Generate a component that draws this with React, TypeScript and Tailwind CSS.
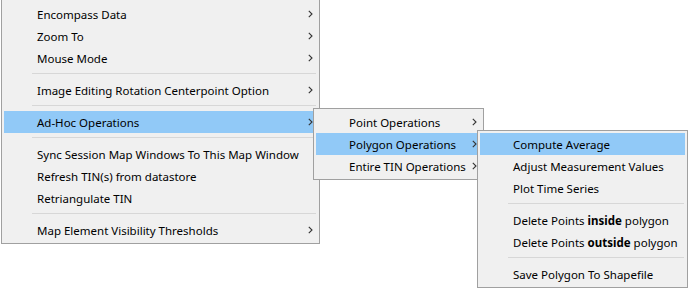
import React from "react";

type Item =
  | { type: "sep" }
  | { type: "item"; label: React.ReactNode; sub?: boolean; active?: boolean };

const Chevron = () => (
  <svg width="5" height="8" viewBox="0 0 5 8" className="block">
    <path d="M0.8 0.8 L4 4 L0.8 7.2" fill="none" stroke="#333333" strokeWidth="1.1" />
  </svg>
);

function Menu({ items, className }: { items: Item[]; className: string }) {
  return (
    <div className={className}>
      {items.map((it, i) =>
        it.type === "sep" ? (
          <div key={i} className="h-[10px] pt-[4px] pl-[28px] pr-[1px]">
            <div className="h-px bg-[#d7d7d7]" />
          </div>
        ) : (
          <div
            key={i}
            className={`flex h-[22px] items-center pl-[33px] pr-[4px] ${it.active ? "bg-[#91c9f7]" : ""}`}
          >
            <span className="flex-1 whitespace-nowrap pt-[1px]">{it.label}</span>
            {it.sub ? <Chevron /> : null}
          </div>
        )
      )}
    </div>
  );
}

export default function App() {
  const main: Item[] = [
    { type: "item", label: "Encompass Data", sub: true },
    { type: "item", label: "Zoom To", sub: true },
    { type: "item", label: "Mouse Mode", sub: true },
    { type: "sep" },
    { type: "item", label: "Image Editing Rotation Centerpoint Option", sub: true },
    { type: "sep" },
    { type: "item", label: "Ad-Hoc Operations", sub: true, active: true },
    { type: "sep" },
    { type: "item", label: "Sync Session Map Windows To This Map Window" },
    { type: "item", label: "Refresh TIN(s) from datastore" },
    { type: "item", label: "Retriangulate TIN" },
    { type: "sep" },
    { type: "item", label: "Map Element Visibility Thresholds", sub: true },
  ];
  const sub1: Item[] = [
    { type: "item", label: "Point Operations", sub: true },
    { type: "item", label: "Polygon Operations", sub: true, active: true },
    { type: "item", label: "Entire TIN Operations", sub: true },
  ];
  const sub2: Item[] = [
    { type: "item", label: "Compute Average", active: true },
    { type: "item", label: "Adjust Measurement Values" },
    { type: "item", label: "Plot Time Series" },
    { type: "sep" },
    {
      type: "item",
      label: (
        <>
          Delete Points <b className="font-bold">inside</b> polygon
        </>
      ),
    },
    {
      type: "item",
      label: (
        <>
          Delete Points <b className="font-bold">outside</b> polygon
        </>
      ),
    },
    { type: "sep" },
    { type: "item", label: "Save Polygon To Shapefile" },
  ];
  return (
    <div
      className="relative h-[288px] w-[690px] overflow-hidden bg-white text-[11.5px] leading-none text-black"
      style={{ fontFamily: '"Noto Sans", "Open Sans", sans-serif' }}
    >
      <Menu
        items={main}
        className="ml-[1px] w-[319px] border-x border-b border-[#a0a0a0] bg-[#f0f0f0] px-[2px] pt-[3px] pb-[2px]"
      />
      <Menu
        items={sub1}
        className="absolute left-[313px] top-[108px] w-[171px] border border-[#a0a0a0] bg-[#f0f0f0] px-[2px] py-[2px]"
      />
      <Menu
        items={sub2}
        className="absolute left-[477px] top-[130px] w-[211px] border border-[#a0a0a0] bg-[#f0f0f0] px-[2px] py-[2px]"
      />
    </div>
  );
}
